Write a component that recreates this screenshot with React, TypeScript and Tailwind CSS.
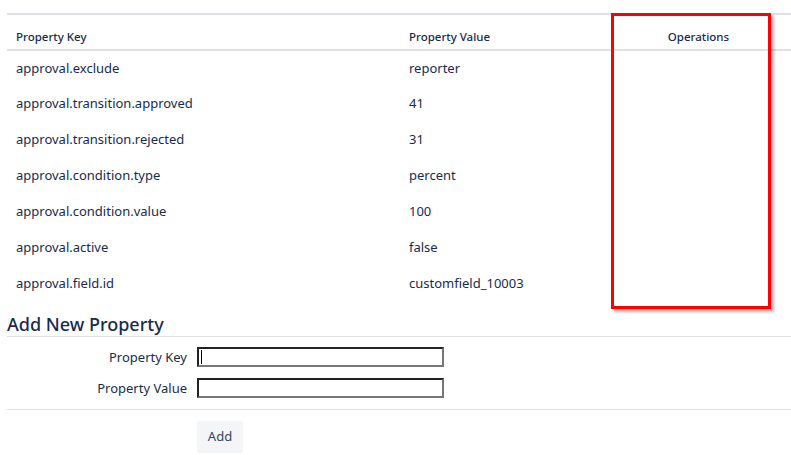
import React from "react";

const rows: [string, string][] = [
  ["approval.exclude", "reporter"],
  ["approval.transition.approved", "41"],
  ["approval.transition.rejected", "31"],
  ["approval.condition.type", "percent"],
  ["approval.condition.value", "100"],
  ["approval.active", "false"],
  ["approval.field.id", "customfield_10003"],
];

const font = { fontFamily: '"Noto Sans", "Open Sans", Arial, sans-serif' };

export default function App() {
  return (
    <div className="relative h-[455px] w-[791px] overflow-hidden bg-white text-[#172b4d]" style={font}>
      <div className="h-[13px]" />
      <table className="ml-[7px] w-[784px] border-collapse border-t-2 border-[#dfe1e6]">
        <thead>
          <tr className="border-b-2 border-[#dfe1e6] text-[11.5px] leading-[14px]">
            <th className="w-[393px] pb-[5px] pl-[9px] pt-[15px] text-left font-medium">Property Key</th>
            <th className="w-[206px] pb-[5px] pl-[9px] pt-[15px] text-left font-medium">Property Value</th>
            <th className="pb-[5px] pt-[15px] text-center font-medium">Operations</th>
          </tr>
        </thead>
        <tbody className="text-[13px]">
          {rows.map(([k, v]) => (
            <tr key={k} className="h-[36px]">
              <td className="pl-[9px]">{k}</td>
              <td className="pl-[9px]">{v}</td>
              <td />
            </tr>
          ))}
        </tbody>
      </table>

      <div className="ml-[7px] mt-[8px]">
        <h2 className="border-b border-[#dfe1e6] pb-[1px] pt-[3px] text-[18px] font-medium leading-[22px]">Add New Property</h2>
        <div className="flex flex-col gap-[11px] pt-[10px] text-[13px]">
          {["Property Key", "Property Value"].map((label, i) => (
            <div key={label} className="flex h-[20px] items-center">
              <label className="w-[190px] pr-[10px] text-right leading-[20px]">{label}</label>
              <div className="relative h-[20px] w-[247px] border-2 border-[#222] border-b-[#777] border-r-[#777] bg-white">
                {i === 0 && <span className="absolute left-[2px] top-[1px] h-[14px] w-px bg-black" />}
              </div>
            </div>
          ))}
        </div>
        <div className="mt-[11px] border-t border-[#dfe1e6] pl-[190px] pt-[11px]">
          <button className="h-[32px] w-[46px] rounded-[3px] bg-[#f4f5f7] text-[13px] text-[#344563]">Add</button>
        </div>
      </div>

      <div className="pointer-events-none absolute left-[611px] top-[13px] h-[296px] w-[160px] border-[3px] border-[#ff0000] shadow-[3px_3px_3px_rgba(0,0,0,0.3)]" />
    </div>
  );
}
